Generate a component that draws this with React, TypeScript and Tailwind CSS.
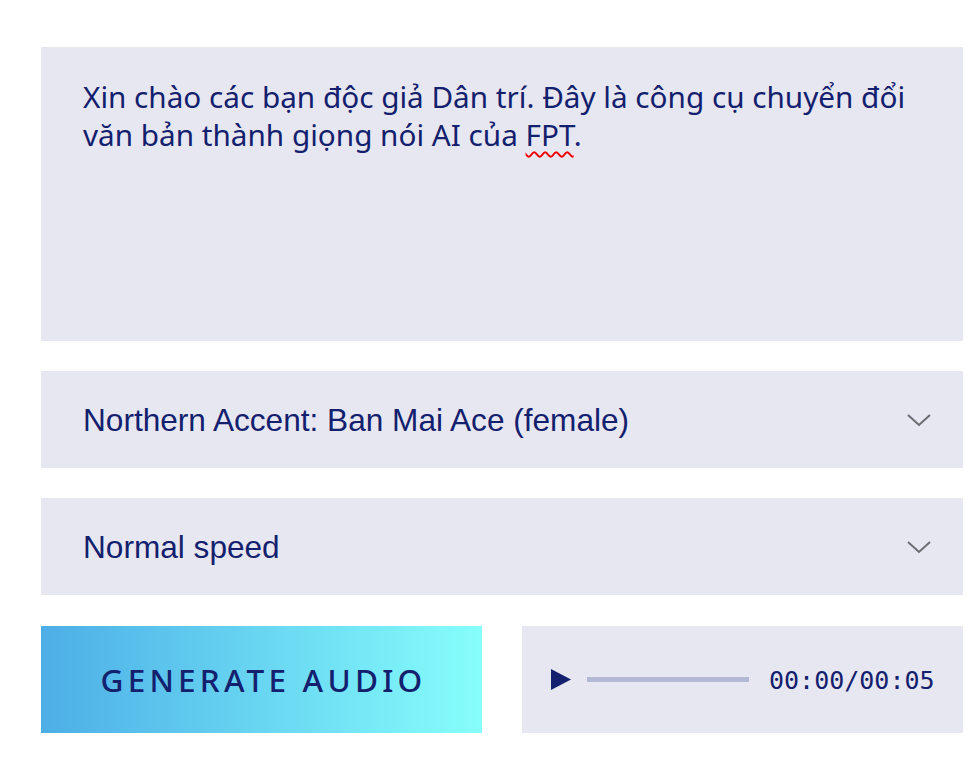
import React from "react";

function Chevron() {
  return (
    <svg width="26" height="16" viewBox="0 0 26 16" fill="none" className="shrink-0">
      <path d="M2 3 L13 13 L24 3" stroke="#6b6b70" strokeWidth="2" />
    </svg>
  );
}

export default function App() {
  const navy = "text-[#13206e]";
  return (
    <div className="w-[980px] h-[759px] bg-white pl-[41px] pr-[17px] pt-[47px]">
      <div className="flex flex-col">
        <div
          className={`h-[294px] bg-[#e7e7f2] pl-[42px] pr-[40px] pt-[31px] text-[29.7px] leading-[38px] ${navy}`}
          style={{ fontFamily: '"Noto Sans", sans-serif' }}
        >
          <div className="max-w-[840px]">
            Xin chào các bạn độc giả Dân trí. Đây là công cụ chuyển đổi văn bản thành giọng nói AI của{" "}
            <span className="underline decoration-wavy decoration-[#e00] decoration-[1.5px] underline-offset-[5px]">FPT</span>.
          </div>
        </div>
        <div
          className={`mt-[30px] h-[97px] bg-[#e7e7f2] flex items-center justify-between pl-[42px] pr-[31px] text-[31.6px] ${navy}`}
          style={{ fontFamily: '"Liberation Sans", Arial, sans-serif' }}
        >
          <span className="pt-[3px]">Northern Accent: Ban Mai Ace (female)</span>
          <Chevron />
        </div>
        <div
          className={`mt-[30px] h-[97px] bg-[#e7e7f2] flex items-center justify-between pl-[42px] pr-[31px] text-[31.6px] ${navy}`}
          style={{ fontFamily: '"Liberation Sans", Arial, sans-serif' }}
        >
          <span className="pt-[3px]">Normal speed</span>
          <Chevron />
        </div>
        <div className="mt-[31px] flex gap-[40px] h-[107px]">
          <div
            className={`w-[441px] flex items-center justify-center bg-gradient-to-r from-[#4daee6] to-[#86fefb] text-[31.5px] font-medium tracking-[4.2px] pl-[4px] ${navy}`}
            style={{ fontFamily: '"Noto Sans", sans-serif' }}
          >
            GENERATE AUDIO
          </div>
          <div className="w-[441px] bg-[#e7e7f2] flex items-center pl-[29px]">
            <svg width="20" height="21" viewBox="0 0 20 21" className="shrink-0">
              <polygon points="0,0 20,10.5 0,21" fill="#13206e" />
            </svg>
            <div className="ml-[16px] w-[162px] h-[5px] bg-[#b3b8d4]" />
            <span
              className={`ml-[20px] text-[25px] pt-[2px] ${navy}`}
              style={{ fontFamily: '"DejaVu Sans Mono", monospace' }}
            >
              00:00/00:05
            </span>
          </div>
        </div>
      </div>
    </div>
  );
}
